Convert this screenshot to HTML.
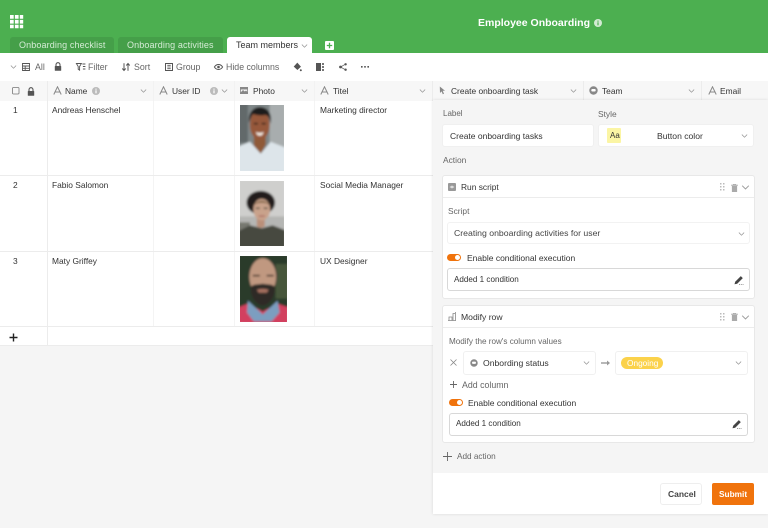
<!DOCTYPE html>
<html><head><meta charset="utf-8"><style>
*{box-sizing:border-box}
html,body{margin:0;padding:0}
html{background:#f5f5f5}
body{width:768px;height:528px;overflow:hidden;position:relative;background:#f5f5f5;font-family:"Liberation Sans",sans-serif;font-size:8.4px;color:#333;filter:blur(.3px)}
.a{position:absolute}
.t{position:absolute;white-space:nowrap;line-height:12px}
.g{color:#666}
.tb{font-size:8.8px}
.box{position:absolute;background:#fff;border:1px solid #ececec;border-radius:3px}
svg.i{position:absolute;overflow:visible;fill:none}
.l{position:absolute;background:#ececec}
</style></head><body>
<svg width="0" height="0" style="position:absolute"><defs>
<symbol id="ch" viewBox="0 0 8 5"><path d="M.7.7 4 4l3.300-3.300" fill="none" stroke="#999" stroke-width=".9"/></symbol>
<symbol id="A" viewBox="0 0 9 9"><path d="M.8 8.500 4.500.8l3.700 7.700M2.200 6h4.600" fill="none" stroke="#888" stroke-width="1"/></symbol>
<symbol id="sel" viewBox="0 0 9 9"><circle cx="4.500" cy="4.500" r="4.200" fill="#888"/><rect x="2.300" y="3" width="4.400" height="2.500" rx="1" fill="#fff"/></symbol>
<symbol id="info" viewBox="0 0 8 8"><circle cx="4" cy="4" r="4" fill="#bbb"/><rect x="3.400" y="3.300" width="1.200" height="3" fill="#fff"/><rect x="3.400" y="1.600" width="1.200" height="1.100" fill="#fff"/></symbol>
<symbol id="lock" viewBox="0 0 8 9"><path d="M2 4V2.700a2 2 0 0 1 4 0V4" fill="none" stroke="#555" stroke-width="1.100"/><rect x=".8" y="4" width="6.400" height="4.800" rx=".6" fill="#555"/></symbol>
<symbol id="pen" viewBox="0 0 10 10"><path d="M.5 9.200 1.200 6.700 6.800 1.100l2 2L3.200 8.700z" fill="#444"/><path d="M5 9.400h4.500" stroke="#777" stroke-width=".8" stroke-dasharray="1 .8"/></symbol>
<symbol id="trash" viewBox="0 0 7 8"><path d="M0 1.200h7M2.300 1V.2h2.400V1" stroke="#aaa" stroke-width=".8" fill="none"/><path d="M.9 1.800h5.200V8H.9z" fill="#aaa"/></symbol>
<symbol id="drag" viewBox="0 0 5 8"><path d="M0 0h1.500v1.500H0zM3 0h1.500v1.500H3zM0 3h1.500v1.500H0zM3 3h1.500v1.500H3zM0 6h1.500v1.500H0zM3 6h1.500v1.500H3z" fill="#bbb"/></symbol>
<filter id="b1" x="-5%" y="-5%" width="110%" height="110%"><feGaussianBlur stdDeviation="1"/></filter>
</defs></svg>

<!-- header -->
<div class="a" style="left:0;top:0;width:768px;height:53px;background:#4caf50"></div>
<svg class="i" style="left:10px;top:15px" width="14" height="14"><path d="M0 0h3.700v3.700H0zM4.900 0h3.700v3.700H4.900zM9.800 0h3.400v3.700H9.800zM0 4.900h3.700v3.700H0zM4.900 4.900h3.700v3.700H4.900zM9.800 4.900h3.400v3.700H9.800zM0 9.800h3.700v3.400H0zM4.900 9.800h3.700v3.400H4.900zM9.800 9.800h3.400v3.400H9.800z" fill="#fff"/></svg>
<div class="t" style="left:478px;top:17px;color:#fff;font-weight:bold;font-size:10.5px">Employee Onboarding</div>
<svg class="i" style="left:594px;top:19px;opacity:.75" width="8" height="8"><circle cx="4" cy="4" r="4" fill="#fff"/><rect x="3.400" y="3.300" width="1.200" height="3" fill="#4caf50"/><rect x="3.400" y="1.600" width="1.200" height="1.100" fill="#4caf50"/></svg>
<div class="a" style="left:10px;top:37px;width:104px;height:16px;background:#459f49;border-radius:3px 3px 0 0"></div>
<div class="t" style="left:19px;top:39px;color:#d5ecd6;font-size:9px;letter-spacing:.12px">Onboarding checklist</div>
<div class="a" style="left:118px;top:37px;width:105px;height:16px;background:#459f49;border-radius:3px 3px 0 0"></div>
<div class="t" style="left:127px;top:39px;color:#d5ecd6;font-size:9px;letter-spacing:.12px">Onboarding activities</div>
<div class="a" style="left:227px;top:37px;width:85px;height:16px;background:#fff;border-radius:3px 3px 0 0"></div>
<div class="t" style="left:236px;top:39px;font-size:9px;color:#333">Team members</div>
<svg class="i" style="left:301px;top:44px" width="7" height="4"><use href="#ch"/></svg>
<svg class="i" style="left:325px;top:41px" width="9" height="9"><rect width="9" height="9" rx="1" fill="#fff"/><path d="M4.500 1.800v5.400M1.800 4.500h5.400" stroke="#4caf50" stroke-width="1.300"/></svg>

<!-- toolbar -->
<div class="a" style="left:0;top:53px;width:768px;height:28px;background:#fff"></div>
<svg class="i" style="left:10px;top:65px" width="7" height="4"><use href="#ch"/></svg>
<svg class="i" style="left:22px;top:63px" width="8" height="8"><path d="M.5.500h7v7h-7zM.5 3h7M.5 5.300h7M3.200 3v4.500" stroke="#555" stroke-width=".9"/></svg>
<div class="t g tb" style="left:35px;top:61px">All</div>
<svg class="i" style="left:54px;top:62px" width="8" height="9"><use href="#lock"/></svg>
<svg class="i" style="left:76px;top:63px" width="10" height="8"><path d="M.4.500h5L3.600 3.500v3.700L2.200 6.300V3.500zM6.400 1h3M6.900 3.500h2.500M6.900 6h2.500" stroke="#555" stroke-width=".9"/></svg>
<div class="t g tb" style="left:88px;top:61px">Filter</div>
<svg class="i" style="left:122px;top:63px" width="8" height="8"><path d="M2 .3v7.400M.3 5.500 2 7.500l1.700-2M6 7.700V.3M4.300 2.500 6 .5l1.700 2" stroke="#555" stroke-width="1"/></svg>
<div class="t g tb" style="left:134px;top:61px">Sort</div>
<svg class="i" style="left:165px;top:63px" width="8" height="8"><path d="M.5.500h7v7h-7z" stroke="#555"/><path d="M2.300 2.300h3.400M2.300 4h3.400M2.300 5.700h3.400" stroke="#555" stroke-width=".8"/></svg>
<div class="t g tb" style="left:176px;top:61px">Group</div>
<svg class="i" style="left:214px;top:64px" width="9" height="6"><path d="M.4 3C1.800.8 3.200.5 4.500.5S7.200.8 8.600 3C7.200 5.200 5.800 5.500 4.500 5.500S1.800 5.200.4 3z" stroke="#555"/><circle cx="4.500" cy="3" r="1.300" fill="#555"/></svg>
<div class="t g tb" style="left:226px;top:61px">Hide columns</div>
<svg class="i" style="left:293px;top:62px" width="9" height="10"><path d="M4.300.6 8 4.800H.6zM.9 4.800h7L4.400 8z" fill="#555"/><circle cx="7.800" cy="8.300" r="1" fill="#555"/></svg>
<svg class="i" style="left:316px;top:63px" width="8" height="8"><path d="M0 0h5v8H0z" fill="#555"/><path d="M6 0h2v2H6zM6 3h2v2H6zM6 6h2v2H6z" fill="#777"/></svg>
<svg class="i" style="left:339px;top:63px" width="8" height="8"><path d="M1.500 4 6.500 1.200M1.500 4l5 2.800" stroke="#666" stroke-width=".8"/><circle cx="1.500" cy="4" r="1.400" fill="#555"/><circle cx="6.600" cy="1.300" r="1.200" fill="#555"/><circle cx="6.600" cy="6.700" r="1.200" fill="#555"/></svg>
<svg class="i" style="left:361px;top:66px" width="8" height="2"><path d="M0 0h1.600v1.600H0zM3.200 0h1.600v1.600H3.200zM6.400 0H8v1.600H6.400z" fill="#555"/></svg>

<!-- grid header -->
<div class="a" style="left:0;top:81px;width:768px;height:20px;background:#f7f7f7"></div>
<svg class="i" style="left:12px;top:87px" width="7" height="7"><rect x=".5" y=".5" width="6.500" height="6.500" rx="1" stroke="#777" stroke-width=".8"/></svg>
<svg class="i" style="left:27px;top:87px" width="8" height="9"><use href="#lock"/></svg>
<div class="l" style="left:47px;top:81px;width:1px;height:265px"></div>
<div class="l" style="left:153px;top:81px;width:1px;height:246px;background:#f2f2f2"></div>
<div class="l" style="left:234px;top:81px;width:1px;height:246px;background:#f2f2f2"></div>
<div class="l" style="left:314px;top:81px;width:1px;height:246px;background:#f2f2f2"></div>
<div class="l" style="left:432px;top:81px;width:1px;height:20px"></div>
<div class="l" style="left:583px;top:81px;width:1px;height:20px"></div>
<div class="l" style="left:701px;top:81px;width:1px;height:20px"></div>
<svg class="i" style="left:53px;top:86px" width="9" height="9"><use href="#A"/></svg>
<div class="t" style="left:65px;top:85px">Name</div>
<svg class="i" style="left:92px;top:87px" width="8" height="8"><use href="#info"/></svg>
<svg class="i" style="left:140px;top:89px" width="7" height="4"><use href="#ch"/></svg>
<svg class="i" style="left:159px;top:86px" width="9" height="9"><use href="#A"/></svg>
<div class="t" style="left:172px;top:85px">User ID</div>
<svg class="i" style="left:210px;top:87px" width="8" height="8"><use href="#info"/></svg>
<svg class="i" style="left:221px;top:89px" width="7" height="4"><use href="#ch"/></svg>
<svg class="i" style="left:240px;top:87px" width="8" height="7"><rect x=".4" y=".4" width="7.200" height="6.200" stroke="#888" stroke-width=".8"/><path d="M.5 5.500 3 3l1.800 1.500L6 3.500l1.500 1.500v1.500H.5z" fill="#888"/><rect x=".5" y=".5" width="7" height="2" fill="#888"/></svg>
<div class="t" style="left:253px;top:85px">Photo</div>
<svg class="i" style="left:301px;top:89px" width="7" height="4"><use href="#ch"/></svg>
<svg class="i" style="left:320px;top:86px" width="9" height="9"><use href="#A"/></svg>
<div class="t" style="left:333px;top:85px">Titel</div>
<svg class="i" style="left:419px;top:89px" width="7" height="4"><use href="#ch"/></svg>
<svg class="i" style="left:439px;top:86px" width="7" height="9"><path d="M.8.500 6 4.800H3.700L5 7.800 3.800 8.300 2.600 5.400 1 7z" fill="#888"/></svg>
<div class="t" style="left:451px;top:85px">Create onboarding task</div>
<svg class="i" style="left:570px;top:89px" width="7" height="4"><use href="#ch"/></svg>
<svg class="i" style="left:589px;top:86px" width="9" height="9"><use href="#sel"/></svg>
<div class="t" style="left:602px;top:85px">Team</div>
<svg class="i" style="left:688px;top:89px" width="7" height="4"><use href="#ch"/></svg>
<svg class="i" style="left:708px;top:86px" width="9" height="9"><use href="#A"/></svg>
<div class="t" style="left:720px;top:85px">Email</div>

<!-- grid rows -->
<div class="a" style="left:0;top:101px;width:768px;height:245px;background:#fff"></div>
<div class="l" style="left:47px;top:101px;width:1px;height:245px"></div>
<div class="l" style="left:153px;top:101px;width:1px;height:226px;background:#f4f4f4"></div>
<div class="l" style="left:234px;top:101px;width:1px;height:226px;background:#f4f4f4"></div>
<div class="l" style="left:314px;top:101px;width:1px;height:226px;background:#f4f4f4"></div>
<div class="l" style="left:0;top:175px;width:768px;height:1px"></div>
<div class="l" style="left:0;top:251px;width:768px;height:1px"></div>
<div class="l" style="left:0;top:326px;width:768px;height:1px"></div>
<div class="l" style="left:0;top:345px;width:768px;height:1px"></div>
<div class="t" style="left:13px;top:104px">1</div>
<div class="t" style="left:13px;top:179px">2</div>
<div class="t" style="left:13px;top:255px">3</div>
<div class="t" style="left:52px;top:104px">Andreas Henschel</div>
<div class="t" style="left:52px;top:179px">Fabio Salomon</div>
<div class="t" style="left:52px;top:255px">Maty Griffey</div>
<div class="t" style="left:320px;top:104px">Marketing director</div>
<div class="t" style="left:320px;top:179px">Social Media Manager</div>
<div class="t" style="left:320px;top:255px">UX Designer</div>
<svg class="i" style="left:9px;top:333px" width="9" height="9"><path d="M4.500.5v8M.5 4.500h8" stroke="#222" stroke-width="1.400"/></svg>

<!-- photos -->
<svg class="a" style="left:240px;top:105px;overflow:hidden" width="43.500" height="65.500" viewBox="0 0 44 66"><g filter="url(#b1)">
<rect x="-2" y="-2" width="48" height="70" fill="#7f8788"/><rect x="30" y="-2" width="16" height="50" fill="#a8adae"/><rect x="-2" y="-2" width="10" height="40" fill="#62696b"/>
<path d="M-2 68V42l12-5 11 12 10-12 15 6v25z" fill="#dde5ea"/>
<path d="M14 32h12v8l-5 9-7-8z" fill="#8f5a38"/>
<ellipse cx="20" cy="20" rx="10" ry="15" fill="#96593a"/>
<path d="M9 18C8 7 14 2 20 2s13 4 11 17c-1-7-3-9-6-9-4 1-9 0-12-1-2 3-3 6-4 9z" fill="#1f1c1d"/>
<path d="M16 27q4 2 8 0-1 4-4 4t-4-4z" fill="#f2e8e0"/><rect x="14" y="18" width="4" height="1.500" fill="#2a1c18"/><rect x="22" y="18" width="4" height="1.500" fill="#2a1c18"/>
</g></svg>
<svg class="a" style="left:240px;top:181px;overflow:hidden" width="43.500" height="65" viewBox="0 0 44 66"><g filter="url(#b1)">
<rect x="-2" y="-2" width="48" height="70" fill="#cfcfcd"/><rect x="-2" y="36" width="48" height="32" fill="#b5b6b4"/><rect x="-2" y="42" width="12" height="26" fill="#77786f"/>
<path d="M-2 68V51l12-6 12 3 11-3 13 5v18z" fill="#46483f"/>
<ellipse cx="21" cy="22" rx="14.500" ry="12" fill="#201c1b"/>
<path d="M17 38h8v8q-4 3-8 0z" fill="#b98f79"/>
<ellipse cx="22" cy="29" rx="8.500" ry="11" fill="#c9a28b"/>
<path d="M12 26q10-12 20 0-4-4-10-4t-10 4z" fill="#7d6140"/>
<rect x="16" y="27" width="4" height="1.300" fill="#443"/><rect x="24" y="27" width="4" height="1.300" fill="#443"/><rect x="19" y="35" width="6" height="1.300" fill="#a8675f"/></g></svg>
<svg class="a" style="left:240px;top:256px;overflow:hidden" width="46.500" height="65.500" viewBox="0 0 47 66"><g filter="url(#b1)">
<rect x="-2" y="-2" width="51" height="70" fill="#2c3a2a"/><rect x="36" y="8" width="12" height="35" fill="#46563b"/>
<path d="M-2 68V52l10-4 15 8 15-8 11 4v18z" fill="#d2405f"/>
<path d="M8 45l15 14 15-14 2 12-8 9H14l-7-9z" fill="#7b9ec0"/>
<path d="M9 20q1-16 14-17 13 1 15 17l-2 10H11z" fill="#4a3f3a"/>
<ellipse cx="23" cy="21" rx="13.500" ry="19" fill="#c09880"/>
<path d="M11 31c3-3 6-2 12-3 6 1 9 0 12 3 1 8-4 18-12 19-8-1-13-11-12-19z" fill="#2e2a28"/>
<path d="M17 34q6-2 12 0l-2 3h-8z" fill="#a5705f"/>
<rect x="13" y="19" width="7" height="1.600" fill="#3a2a24"/><rect x="27" y="19" width="7" height="1.600" fill="#3a2a24"/>
</g></svg>

<!-- dialog -->
<div class="a" style="left:433px;top:100px;width:335px;height:414px;background:#f5f5f5;box-shadow:0 0 3px rgba(0,0,0,.12)"></div>
<div class="a" style="left:433px;top:473px;width:335px;height:41px;background:#fff"></div>

<div class="t g" style="left:443px;top:108px;font-size:8px">Label</div>
<div class="t g" style="left:598px;top:108px;font-size:8.4px">Style</div>
<div class="box" style="left:442px;top:124px;width:152px;height:23px;border-color:#f0f0f0"></div>
<div class="t" style="left:450px;top:130px;font-size:8.5px">Create onboarding tasks</div>
<div class="box" style="left:598px;top:124px;width:156px;height:23px;border-color:#f0f0f0"></div>
<div class="a" style="left:607px;top:128px;width:14px;height:15px;background:#fbf5a4;border-radius:1px"></div>
<div class="t" style="left:610px;top:130px;font-size:8px">Aa</div>
<div class="t" style="left:657px;top:130px;font-size:8.6px">Button color</div>
<svg class="i" style="left:741px;top:134px" width="7" height="4"><use href="#ch"/></svg>
<div class="t g" style="left:443px;top:154px;font-size:8.4px">Action</div>

<!-- run script -->
<div class="box" style="left:442px;top:175px;width:313px;height:124px;border-color:#e8e8e8;background:#fff"></div>
<div class="a" style="left:443px;top:197px;width:311px;height:1px;background:#ececec"></div>
<svg class="i" style="left:448px;top:183px" width="8" height="8"><rect width="8" height="8" rx="1" fill="#999"/><path d="M1.500 4 4 2.500 6.500 4 4 5.500z" fill="#ddd"/></svg>
<div class="t" style="left:461px;top:181px">Run script</div>
<svg class="i" style="left:720px;top:183px" width="5" height="8"><use href="#drag"/></svg>
<svg class="i" style="left:731px;top:184px" width="7" height="8"><use href="#trash"/></svg>
<svg class="i" style="left:741px;top:185px" width="9" height="5"><use href="#ch"/></svg>
<div class="t g" style="left:448px;top:205px">Script</div>
<div class="box" style="left:447px;top:222px;width:303px;height:22px;border-color:#f2f2f2"></div>
<div class="t" style="left:454px;top:227px;color:#444;font-size:8.7px">Creating onboarding activities for user</div>
<svg class="i" style="left:738px;top:232px" width="7" height="4"><use href="#ch"/></svg>
<div class="a" style="left:447px;top:254px;width:14px;height:7px;background:#f0730c;border-radius:4px"></div>
<div class="a" style="left:455px;top:255px;width:5px;height:5px;background:#fff;border-radius:50%"></div>
<div class="t" style="left:467px;top:252px;font-size:8.5px">Enable conditional execution</div>
<div class="box" style="left:447px;top:268px;width:303px;height:23px;border-color:#d8d8d8"></div>
<div class="t" style="left:454px;top:274px;font-size:8.1px">Added 1 condition</div>
<svg class="i" style="left:734px;top:275px" width="10" height="10"><use href="#pen"/></svg>

<!-- modify row -->
<div class="box" style="left:442px;top:305px;width:313px;height:138px;border-color:#e8e8e8;background:#fff"></div>
<div class="a" style="left:443px;top:327px;width:311px;height:1px;background:#ececec"></div>
<svg class="i" style="left:448px;top:312px" width="8" height="9"><path d="M0 8.500h8M7.400 0v8.500M5 1.500h2.400v7H5zM1 5h3v3.500H1z" stroke="#888" stroke-width=".8"/></svg>
<div class="t" style="left:461px;top:311px;font-size:8.6px">Modify row</div>
<svg class="i" style="left:720px;top:313px" width="5" height="8"><use href="#drag"/></svg>
<svg class="i" style="left:731px;top:313px" width="7" height="8"><use href="#trash"/></svg>
<svg class="i" style="left:741px;top:315px" width="9" height="5"><use href="#ch"/></svg>
<div class="t g" style="left:449px;top:336px;font-size:8.15px">Modify the row's column values</div>
<svg class="i" style="left:450px;top:359px" width="7" height="7"><path d="M.5.500l6 6M6.500.5l-6 6" stroke="#888" stroke-width=".8"/></svg>
<div class="box" style="left:463px;top:351px;width:133px;height:24px;border-color:#f0f0f0"></div>
<svg class="i" style="left:470px;top:359px" width="8" height="8"><use href="#sel"/></svg>
<div class="t" style="left:483px;top:357px;font-size:8.65px">Onbording status</div>
<svg class="i" style="left:583px;top:361px" width="7" height="4"><use href="#ch"/></svg>
<svg class="i" style="left:601px;top:360px" width="9" height="6"><path d="M0 3h7" stroke="#999" stroke-width="1.400"/><path d="M6 .5 9 3 6 5.500z" fill="#999"/></svg>
<div class="box" style="left:615px;top:351px;width:133px;height:24px;border-color:#f0f0f0"></div>
<div class="a" style="left:621px;top:357px;width:42px;height:12px;background:#fbd24b;border-radius:6px"></div>
<div class="t" style="left:627px;top:357px;color:#fff;font-size:8.3px">Ongoing</div>
<svg class="i" style="left:735px;top:361px" width="7" height="4"><use href="#ch"/></svg>
<svg class="i" style="left:450px;top:381px" width="7" height="7"><path d="M3.500 0v7M0 3.500h7" stroke="#666" stroke-width=".9"/></svg>
<div class="t g" style="left:462px;top:379px;font-size:8.8px">Add column</div>
<div class="a" style="left:449px;top:399px;width:14px;height:7px;background:#f0730c;border-radius:4px"></div>
<div class="a" style="left:457px;top:400px;width:5px;height:5px;background:#fff;border-radius:50%"></div>
<div class="t" style="left:468px;top:397px;font-size:8.5px">Enable conditional execution</div>
<div class="box" style="left:449px;top:413px;width:299px;height:23px;border-color:#d8d8d8"></div>
<div class="t" style="left:456px;top:418px;font-size:8.1px">Added 1 condition</div>
<svg class="i" style="left:732px;top:419px" width="10" height="10"><use href="#pen"/></svg>

<svg class="i" style="left:443px;top:452px" width="9" height="9"><path d="M4.500 0v9M0 4.500h9" stroke="#666" stroke-width=".9"/></svg>
<div class="t g" style="left:457px;top:451px;font-size:8.2px">Add action</div>

<div class="box" style="left:660px;top:483px;width:42px;height:22px;border-color:#eee"></div>
<div class="t" style="left:668px;top:488px;font-weight:bold;font-size:8.500px;color:#444">Cancel</div>
<div class="a" style="left:712px;top:483px;width:42px;height:22px;background:#f0730c;border-radius:2px"></div>
<div class="t" style="left:719px;top:488px;font-weight:bold;font-size:8.300px;color:#fff">Submit</div>
</body></html>
